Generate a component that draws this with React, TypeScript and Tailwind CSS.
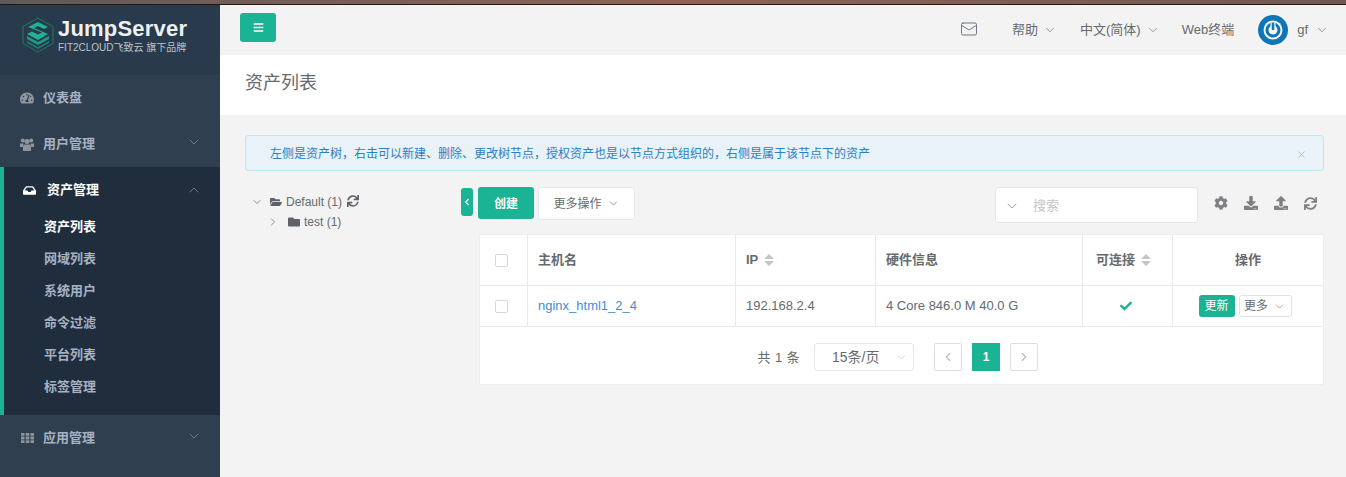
import { ChevronDown, ChevronLeft, ChevronRight, ChevronUp, Mail, X } from "lucide-react";
import {
  FaCheck,
  FaCog,
  FaDownload,
  FaFolder,
  FaFolderOpen,
  FaInbox,
  FaSync,
  FaTachometerAlt,
  FaUpload,
  FaBars,
} from "react-icons/fa";

const font = { fontFamily: '"Liberation Sans", "Noto Sans CJK SC", sans-serif' };

const subMenu = ["资产列表", "网域列表", "系统用户", "命令过滤", "平台列表", "标签管理"];

function SortIcon() {
  return (
    <svg width="10" height="12" viewBox="0 0 10 12" className="ml-[6px]">
      <path d="M5 0 L10 5 H0 Z M0 7 H10 L5 12 Z" fill="#c2c5ce" />
    </svg>
  );
}

function Logo() {
  return (
    <svg width="32" height="36" viewBox="0 0 32 36">
      <path d="M16 1 L31 9.500 V26.500 L16 35 L1 26.500 V9.500 Z" fill="none" stroke="#1f7a6c" strokeWidth="1" />
      <path d="M5 19 L16 25 L27 19 V22 L16 28 L5 22 Z" fill="#1f9c84" />
      <path d="M5 24 L16 30 L27 24 V26 L16 32 L5 26 Z" fill="#1a7f6e" />
      <path d="M16 5 L26 10 L22 12 L16 9 L12 11 L26 17 L16 23 L5 17 L10 14.500 L16 17.500 L20 15.500 L6 10 Z" fill="#22b096" />
    </svg>
  );
}

function GroupIcon() {
  return (
    <svg width="14" height="13" viewBox="0 0 14 13" fill="currentColor">
      <circle cx="2.800" cy="2.500" r="2" />
      <circle cx="11.200" cy="2.500" r="2" />
      <circle cx="7" cy="3.500" r="2.500" />
      <path d="M0 5.500 H3.500 L3 9 H0 Z M10.500 5.500 H14 V9 H11 Z M3.800 6.500 H10.200 L11 9 V13 H3 V9 Z" />
    </svg>
  );
}

function GridIcon() {
  return (
    <svg width="13" height="10" viewBox="0 0 13 10" fill="currentColor">
      <path d="M0 0 H3.500 V2.800 H0 Z M4.700 0 H8.300 V2.800 H4.700 Z M9.500 0 H13 V2.800 H9.500 Z M0 3.600 H3.500 V6.400 H0 Z M4.700 3.600 H8.300 V6.400 H4.700 Z M9.500 3.600 H13 V6.400 H9.500 Z M0 7.200 H3.500 V10 H0 Z M4.700 7.200 H8.300 V10 H4.700 Z M9.500 7.200 H13 V10 H9.500 Z" />
    </svg>
  );
}

function NavItem({ icon, label, chevron }: { icon: React.ReactNode; label: string; chevron?: boolean }) {
  return (
    <div className="relative flex h-[46px] items-center pl-5 pr-5 text-[#a7b1c2]">
      <span className="flex w-[14px] justify-center text-[#8f959d]">{icon}</span>
      <span className="ml-[9px] text-[13px] font-bold">{label}</span>
      {chevron && <ChevronDown size={16} strokeWidth={1.2} className="absolute right-[18px] top-[13px] text-[#7f8b9b]" />}
    </div>
  );
}

export default function App() {
  return (
    <div className="flex h-[477px] w-[1346px] flex-col overflow-hidden bg-[#f3f3f4]" style={font}>
      {/* window strip */}
      <div className="h-[5px] shrink-0 border-b border-[#2a1410] bg-gradient-to-r from-[#5f5a5a] via-[#8f6355] to-[#6f5a52]" />

      <div className="flex min-h-0 flex-1">
        {/* Sidebar */}
        <aside className="flex w-[220px] shrink-0 flex-col bg-[#2f3f50]">
          <div className="flex h-[70px] shrink-0 items-start bg-[#283a4b] pl-[22px] pt-[12px]">
            <Logo />
            <div className="ml-[4px] -mt-[1px]">
              <div className="text-[22px] font-bold leading-[26px] tracking-[0.2px] text-[#eef1f3]">JumpServer</div>
              <div className="whitespace-nowrap text-[10px] leading-[12px] text-[#bcc5cc]">FIT2CLOUD飞致云 旗下品牌</div>
            </div>
          </div>

          <div className="h-[92px] shrink-0">
            <NavItem icon={<FaTachometerAlt size={14} />} label="仪表盘" />
            <NavItem icon={<GroupIcon />} label="用户管理" chevron />
          </div>

          <div className="h-[248px] shrink-0 border-l-4 border-[#1ab394] bg-[#1f2d3c]">
            <div className="relative flex h-[46px] items-center pl-[19px] text-white">
              <FaInbox size={13} />
              <span className="ml-[11px] text-[13px] font-bold">资产管理</span>
              <ChevronUp size={16} strokeWidth={1.2} className="absolute right-[18px] top-[15px] text-[#7f8b9b]" />
            </div>
            <div className="-mt-[2px]">
              {subMenu.map((item, i) => (
                <div
                  key={item}
                  className={`flex h-8 items-center pl-10 text-[13px] font-bold ${i === 0 ? "text-white" : "text-[#a7b1c2]"}`}
                >
                  {item}
                </div>
              ))}
            </div>
          </div>

          <NavItem icon={<GridIcon />} label="应用管理" chevron />
        </aside>

        {/* Main */}
        <main className="flex min-w-0 flex-1 flex-col">
          <header className="relative flex h-[50px] shrink-0 items-center pl-5 pr-[17px] text-[13px] text-[#676a6c]">
            <button className="absolute left-5 top-2 flex h-[29px] w-9 items-center justify-center rounded-[3px] bg-[#1ab394] text-white">
              <FaBars size={11} />
            </button>
            <div className="ml-auto flex items-center">
              <Mail size={18} strokeWidth={1.2} className="-mt-[2px] text-[#5f6b7a]" />
              <span className="ml-[34px]">帮助</span>
              <ChevronDown size={14} strokeWidth={1.2} className="ml-[5px]" />
              <span className="ml-[23px]">中文(简体)</span>
              <ChevronDown size={14} strokeWidth={1.2} className="ml-[5px] text-[#9a6a5a]" />
              <span className="ml-[22px]">Web终端</span>
              <svg width="30" height="30" viewBox="0 0 30 30" className="ml-6">
                <circle cx="15" cy="15" r="15" fill="#0f75b5" />
                <circle cx="15" cy="15" r="9.500" fill="#f3f7fa" />
                <circle cx="15" cy="15" r="6" fill="none" stroke="#0f75b5" strokeWidth="3" />
                <path d="M15 8 V15" stroke="#f3f7fa" strokeWidth="5" />
                <path d="M15 8 V15" stroke="#0f75b5" strokeWidth="2.500" />
              </svg>
              <span className="ml-[9px]">gf</span>
              <ChevronDown size={14} strokeWidth={1.2} className="ml-[7px]" />
            </div>
          </header>

          <div className="flex h-[60px] shrink-0 items-center bg-white pl-[25px] pb-[5px] text-lg text-[#676a6c]">资产列表</div>

          <div className="flex-1 pl-[25px] pr-[22px] pt-5">
            <div className="flex h-[36px] items-center justify-between rounded-[3px] border border-[#bce8f1] bg-[#e8f2f8] pl-6 pr-4 pt-[2px] text-xs text-[#2a80c5]">
              <span>左侧是资产树，右击可以新建、删除、更改树节点，授权资产也是以节点方式组织的，右侧是属于该节点下的资产</span>
              <X size={11} className="text-[#b5bcc4]" />
            </div>

            <div className="mt-[16px] flex">
              {/* Tree */}
              <div className="w-[216px] shrink-0 pl-[6px] pt-[5px] text-xs text-[#676a6c]">
                <div className="flex h-5 items-center">
                  <ChevronDown size={12} strokeWidth={1.5} />
                  <FaFolderOpen size={12} className="ml-[7px] text-[#5f6368]" />
                  <span className="ml-[4px]">Default (1)</span>
                  <FaSync size={12} className="ml-[5px] -mt-[3px] text-[#5f6368]" />
                </div>
                <div className="flex h-5 items-center pl-[16px]">
                  <ChevronRight size={12} strokeWidth={1.5} />
                  <FaFolder size={12} className="ml-[9px] text-[#5f6368]" />
                  <span className="ml-[4px]">test (1)</span>
                </div>
              </div>

              {/* Toolbar and table */}
              <div className="relative min-w-0 flex-1 pl-[17px]">
                <button className="absolute left-0 top-[1px] flex h-7 w-3 items-center justify-center rounded-[3px] bg-[#1ab394] text-white">
                  <ChevronLeft size={10} strokeWidth={3} />
                </button>
                <div className="flex h-[48px] items-start">
                  <button className="flex h-8 w-14 items-center justify-center rounded-[3px] bg-[#1ab394] pt-px text-xs font-bold text-white">创建</button>
                  <button className="ml-1 flex h-[33px] w-[97px] items-center justify-center gap-[5px] rounded-[3px] border border-[#e7eaec] bg-white text-xs text-[#676a6c]">
                    更多操作
                    <ChevronDown size={13} strokeWidth={1.2} />
                  </button>
                  <div className="ml-[360px] flex h-9 w-[203px] items-center rounded-[3px] border border-[#e5e6e7] bg-white pl-2 pt-[2px] text-[13px] text-[#c5c7cb]">
                    <ChevronDown size={16} strokeWidth={1.2} className="text-[#8f9398]" />
                    <span className="ml-[13px]">搜索</span>
                  </div>
                  <div className="ml-[16px] mt-[9px] flex items-center gap-4 text-[#7e8085]">
                    <FaCog size={14} />
                    <FaDownload size={14} />
                    <FaUpload size={14} />
                    <FaSync size={13} />
                  </div>
                </div>

                <div className="ml-[2px] mr-px bg-white text-[13px] text-[#676a6c] shadow-[0_0_0_1px_#ebedf0]">
                  <div className="flex h-[51px] border-b border-[#e7eaec] font-bold">
                    <div className="flex w-[48px] items-center justify-center border-r border-[#e7eaec] pr-1">
                      <span className="h-[13px] w-[13px] rounded-[2px] border border-[#d5d8de] bg-white" />
                    </div>
                    <div className="flex w-[208px] items-center border-r border-[#e7eaec] pl-[10px]">主机名</div>
                    <div className="flex w-[140px] items-center border-r border-[#e7eaec] pl-[10px]">
                      IP
                      <SortIcon />
                    </div>
                    <div className="flex w-[207px] items-center border-r border-[#e7eaec] pl-[10px]">硬件信息</div>
                    <div className="flex w-[90px] items-center justify-center border-r border-[#e7eaec] pr-2">
                      可连接
                      <SortIcon />
                    </div>
                    <div className="flex flex-1 items-center justify-center">操作</div>
                  </div>
                  <div className="flex h-[41px] border-b border-[#e7eaec]">
                    <div className="flex w-[48px] items-center justify-center border-r border-[#e7eaec] pr-1">
                      <span className="h-[13px] w-[13px] rounded-[2px] border border-[#d5d8de] bg-white" />
                    </div>
                    <div className="flex w-[208px] items-center border-r border-[#e7eaec] pl-[10px] text-[#4a8bd0]">nginx_html1_2_4</div>
                    <div className="flex w-[140px] items-center border-r border-[#e7eaec] pl-[10px]">192.168.2.4</div>
                    <div className="flex w-[207px] items-center border-r border-[#e7eaec] pl-[10px]">4 Core 846.0 M 40.0 G</div>
                    <div className="flex w-[90px] items-center justify-center border-r border-[#e7eaec] pr-[4px] text-[#1ab394]">
                      <FaCheck size={12} />
                    </div>
                    <div className="flex flex-1 items-center justify-center gap-1 pr-[6px]">
                      <button className="flex h-[22px] w-9 items-center justify-center rounded-[3px] bg-[#1ab394] text-xs text-white">更新</button>
                      <button className="flex h-[22px] w-[53px] items-center justify-center gap-[5px] rounded-[3px] border border-[#e0e2e6] bg-white text-xs">
                        更多
                        <ChevronDown size={13} strokeWidth={1.2} className="text-[#9a6a5a]" />
                      </button>
                    </div>
                  </div>
                  <div className="flex h-[57px] items-start justify-end pr-[285px] pt-[16px]">
                    <span className="mt-[5px] tracking-[0.4px]">共 1 条</span>
                    <div className="relative ml-[14px] flex h-7 w-[100px] items-center rounded-[3px] border border-[#e5e6e7] pl-[17px] text-sm">
                      15条/页
                      <ChevronDown size={13} strokeWidth={1.2} className="absolute right-[5px] top-[7px] text-[#b8bcc2]" />
                    </div>
                    <button className="ml-5 flex h-7 w-7 items-center justify-center rounded-[2px] border border-[#dcdee2] text-[#b8bdc6]">
                      <ChevronLeft size={14} strokeWidth={2} />
                    </button>
                    <button className="ml-[10px] flex h-7 w-7 items-center justify-center bg-[#1ab394] text-xs font-bold text-white">1</button>
                    <button className="ml-[10px] flex h-7 w-7 items-center justify-center rounded-[2px] border border-[#dcdee2] text-[#b8bdc6]">
                      <ChevronRight size={14} strokeWidth={2} />
                    </button>
                  </div>
                </div>
              </div>
            </div>
          </div>
        </main>
      </div>
    </div>
  );
}
